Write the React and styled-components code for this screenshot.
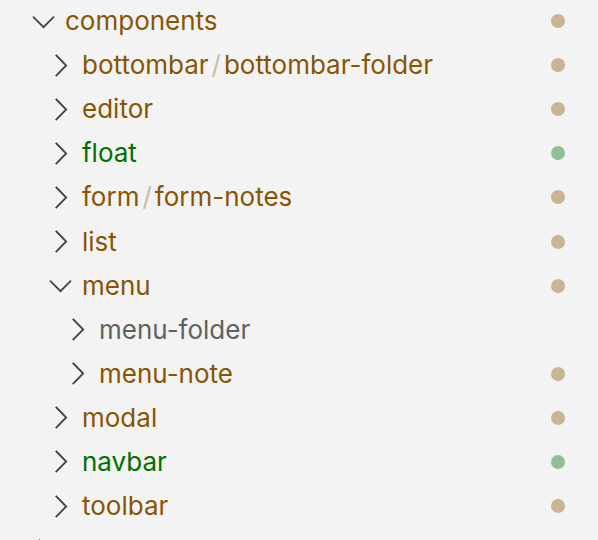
import React from "react";
import styled, { createGlobalStyle } from "styled-components";

const GlobalStyle = createGlobalStyle`
  html, body {
    margin: 0;
    padding: 0;
    background: #f3f3f3;
    overflow: hidden;
  }
  body {
    font-family: Inter, "Noto Sans", "Liberation Sans", sans-serif;
  }
`;

const COLORS = {
  modified: "#895503",
  added: "#007100",
  plain: "#616161",
};

const Tree = styled.div`
  width: 598px;
  height: 540px;
  overflow: hidden;
  background: #f3f3f3;
`;

const List = styled.ul`
  list-style: none;
  margin: -1px 0 0 0;
  padding: 0;
`;

const Row = styled.li`
  display: flex;
  align-items: center;
  height: 44.1px;
  padding-left: ${(p) => 26 + (p.$level - 1) * 17}px;
  padding-right: 33px;
`;

const Twistie = styled.span`
  flex: 0 0 35px;
  width: 35px;
  height: 35px;
  display: flex;
  align-items: center;
  justify-content: center;
  color: #424242;
`;

const Label = styled.span`
  flex: 1;
  margin-left: 4px;
  font-size: 26px;
  line-height: 44px;
  white-space: nowrap;
  color: ${(p) => p.$color};
`;

const Sep = styled.span`
  color: ${(p) => p.$color};
  opacity: 0.35;
  margin: 0 3px;
`;

const Dot = styled.span`
  flex: 0 0 14px;
  width: 14px;
  height: 14px;
  border-radius: 50%;
  background: ${(p) => p.$color};
  opacity: ${(p) => (p.$color ? 0.4 : 0)};
`;

function Chevron({ open }) {
  return (
    <svg width="35" height="35" viewBox="0 0 16 16" fill="none">
      <polyline
        points={open ? "3.5,6.1 8,10.6 12.5,6.1" : "6.1,3.4 10.6,8 6.1,12.6"}
        stroke="currentColor"
        strokeWidth="0.82"
        strokeLinecap="square"
      />
    </svg>
  );
}

const rows = [
  { level: 1, open: true, name: ["components"], status: "modified" },
  { level: 2, name: ["bottombar", "bottombar-folder"], status: "modified" },
  { level: 2, name: ["editor"], status: "modified" },
  { level: 2, name: ["float"], status: "added" },
  { level: 2, name: ["form", "form-notes"], status: "modified" },
  { level: 2, name: ["list"], status: "modified" },
  { level: 2, open: true, name: ["menu"], status: "modified" },
  { level: 3, name: ["menu-folder"], status: "plain" },
  { level: 3, name: ["menu-note"], status: "modified" },
  { level: 2, name: ["modal"], status: "modified" },
  { level: 2, name: ["navbar"], status: "added" },
  { level: 2, name: ["toolbar"], status: "modified" },
  { level: 1, name: ["dropdown"], status: "modified" },
];

export default function App() {
  return (
    <>
      <GlobalStyle />
      <Tree>
        <List>
          {rows.map((r, i) => {
            const color = COLORS[r.status];
            return (
              <Row key={i} $level={r.level}>
                <Twistie>
                  <Chevron open={r.open} />
                </Twistie>
                <Label $color={color}>
                  {r.name.map((part, j) => (
                    <React.Fragment key={j}>
                      {j > 0 && <Sep $color={color}>/</Sep>}
                      {part}
                    </React.Fragment>
                  ))}
                </Label>
                <Dot $color={r.status === "plain" ? null : color} />
              </Row>
            );
          })}
        </List>
      </Tree>
    </>
  );
}
